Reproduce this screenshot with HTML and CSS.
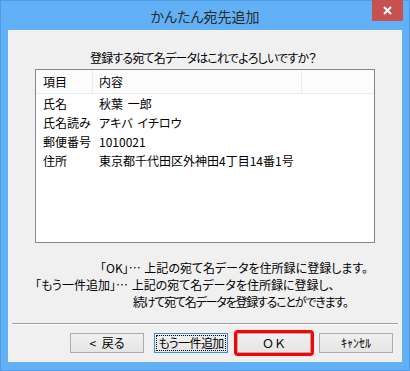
FILE: index.html
```html
<!DOCTYPE html>
<html lang="ja">
<head>
<meta charset="utf-8">
<title>かんたん宛先追加</title>
<link rel="stylesheet" href="styles.css">
</head>
<body>
<div class="window">
  <div class="titlebar">
    <span class="title">かんたん宛先追加</span>
    <div class="close">
      <svg width="9" height="9" viewBox="0 0 9 9"><path d="M1 1L8 8M8 1L1 8" stroke="#fff" stroke-width="2" fill="none"/></svg>
    </div>
  </div>
  <div class="client">
    <div class="question">登録する宛て名データはこれでよろしいですか？</div>
    <div class="table">
      <div class="row head">
        <div class="c1">項目</div>
        <div class="c2">内容</div>
        <div class="c3"></div>
      </div>
      <div class="row"><div class="c1">氏名</div><div class="c2">秋葉 一郎</div></div>
      <div class="row"><div class="c1">氏名読み</div><div class="c2">アキバ イチロウ</div></div>
      <div class="row"><div class="c1">郵便番号</div><div class="c2">1010021</div></div>
      <div class="row"><div class="c1">住所</div><div class="c2">東京都千代田区外神田4丁目14番1号</div></div>
    </div>
    <div class="desc">
      <div class="line l1">「OK」… 上記の宛て名データを住所録に登録します。</div>
      <div class="line l2">「もう一件追加」… 上記の宛て名データを住所録に登録し、</div>
      <div class="line l3">続けて宛て名データを登録することができます。</div>
    </div>
    <div class="sep"></div>
    <div class="buttons">
      <button class="btn back">&lt; 戻る</button>
      <button class="btn add"><span class="focus">もう一件追加</span></button>
      <span class="hl"><button class="btn ok">ＯＫ</button></span>
      <button class="btn cancel">ｷｬﾝｾﾙ</button>
    </div>
  </div>
</div>
</body>
</html>
```
FILE: styles.css
```css
html, body {
  margin: 0;
  padding: 0;
}
body {
  width: 410px;
  height: 371px;
  overflow: hidden;
  font-family: "Noto Sans CJK JP", "Noto Sans", sans-serif;
  font-feature-settings: "palt";
  font-size: 12px;
  color: #000;
}
.window {
  box-sizing: border-box;
  width: 410px;
  height: 371px;
  background: #62b1f6;
  border: 1px solid #4f9ce2;
  display: flex;
  flex-direction: column;
}
.titlebar {
  position: relative;
  height: 29px;
  display: flex;
  align-items: center;
  justify-content: center;
}
.title {
  font-size: 14px;
  color: #2a2a2a;
  margin-top: 1px;
}
.close {
  position: absolute;
  top: -1px;
  right: 6px;
  width: 31px;
  height: 21px;
  background: #c75050;
  display: flex;
  align-items: center;
  justify-content: center;
}
.client {
  margin: 0 7px;
  height: 332px;
  background: #f0f0f0;
  display: flex;
  flex-direction: column;
}
.question {
  margin-top: 20px;
  line-height: 16px;
  text-align: center;
  padding-right: 4px;
  letter-spacing: -0.8px;
}
.table {
  box-sizing: border-box;
  margin-top: 3px;
  margin-left: 27px;
  width: 340px;
  height: 174px;
  border: 1px solid #828790;
  background: #fff;
}
.row {
  display: grid;
  grid-template-columns: 57px 209px 1fr;
  height: 19px;
  line-height: 19px;
  white-space: nowrap;
  word-spacing: 2px;
}
.row.head {
  height: 23px;
  line-height: 23px;
  background: #fcfcfc;
  border-bottom: 1px solid #e3ecf7;
}
.row .c1 {
  padding-left: 7px;
}
.row .c2 {
  padding-left: 6px;
}
.row.head .c1,
.row.head .c2 {
  border-right: 1px solid #e3ecf7;
}
.desc {
  margin-top: 16px;
}
.line {
  line-height: 17px;
  white-space: nowrap;
  word-spacing: 1px;
}
.l1 { margin-left: 92px; }
.l2 { margin-left: 27px; }
.l3 { margin-left: 125px; letter-spacing: -1.2px; }
.sep {
  margin: 13px 4px 0 4px;
  height: 1px;
  background: #a0a0a0;
  border-bottom: 1px solid #fff;
}
.buttons {
  display: flex;
  align-items: center;
  margin-top: 8px;
  padding-left: 62px;
}
.btn {
  box-sizing: border-box;
  width: 74px;
  height: 20px;
  padding: 0;
  margin: 0;
  font-family: "Noto Sans CJK JP", "Noto Sans", sans-serif;
  font-feature-settings: "palt";
  font-size: 12px;
  line-height: 16px;
  color: #000;
  background: linear-gradient(#f0f0f0, #e5e5e5);
  border: 1px solid #acacac;
  border-radius: 0;
  display: flex;
  align-items: center;
  justify-content: center;
  white-space: nowrap;
}
.back {
  word-spacing: 3px;
}
.add {
  margin-left: 10px;
  border-color: #3c8ee0;
  padding: 1px;
}
.focus {
  box-sizing: border-box;
  width: 100%;
  height: 100%;
  border: 1px dotted #000;
  display: flex;
  align-items: center;
  justify-content: center;
  line-height: 14px;
  letter-spacing: -0.6px;
  white-space: nowrap;
}
.hl {
  display: flex;
  margin: -3px 0 -3px 6px;
  border: 3px solid #f00;
  border-radius: 4px;
}
.ok {
  font-feature-settings: normal;
}
.cancel {
  margin-left: 5px;
}
```
